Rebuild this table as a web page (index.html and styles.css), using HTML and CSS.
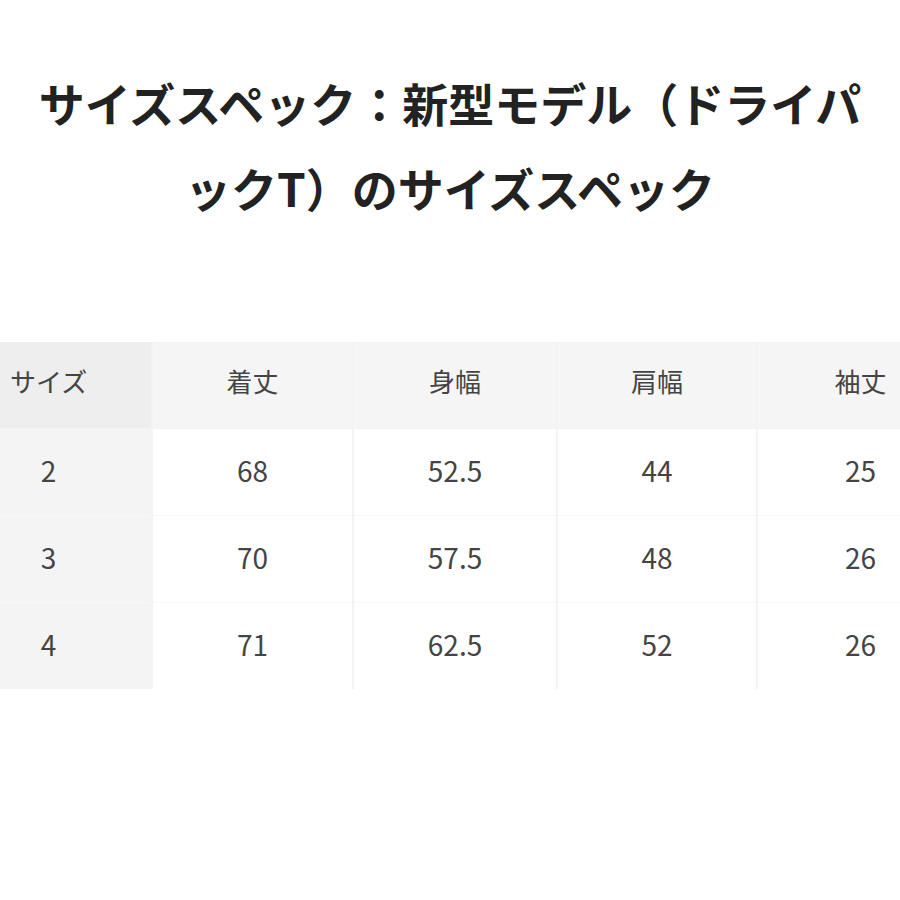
FILE: index.html
```html
<!DOCTYPE html>
<html lang="ja">
<head>
<meta charset="utf-8">
<link rel="stylesheet" href="styles.css">
</head>
<body>
<div class="page">
  <h1 class="title">サイズスペック：新型モデル（ドライパ<br>ックT）のサイズスペック</h1>
  <div class="table-wrap">
    <table class="spec">
      <colgroup>
        <col class="c-size"><col class="c-a"><col class="c-b"><col class="c-c"><col class="c-d">
      </colgroup>
      <thead>
        <tr><th class="first">サイズ</th><th>着丈</th><th>身幅</th><th>肩幅</th><th>袖丈</th></tr>
      </thead>
      <tbody>
        <tr><td class="first">2</td><td>68</td><td>52.5</td><td>44</td><td>25</td></tr>
        <tr><td class="first">3</td><td>70</td><td>57.5</td><td>48</td><td>26</td></tr>
        <tr><td class="first">4</td><td>71</td><td>62.5</td><td>52</td><td>26</td></tr>
      </tbody>
    </table>
  </div>
</div>
</body>
</html>
```

FILE: styles.css
```css
html, body {
  margin: 0;
  padding: 0;
  background: #ffffff;
  overflow: hidden;
}
body {
  width: 900px;
  height: 900px;
  font-family: "Noto Sans CJK JP", "Noto Sans", sans-serif;
}
.page {
  padding-top: 60px;
  width: 900px;
  overflow: hidden;
}
.title {
  margin: 0;
  text-align: center;
  font-size: 46px;
  line-height: 85px;
  font-weight: 700;
  color: #222222;
}
.table-wrap {
  margin-top: 112px;
  width: 900px;
  overflow: hidden;
}
.spec {
  width: 963px;
  table-layout: fixed;
  border-collapse: collapse;
  color: #444444;
}
.c-size { width: 152px; }
.c-a { width: 201px; }
.c-b { width: 204px; }
.c-c { width: 200px; }
.c-d { width: 206px; }
.spec th, .spec td {
  text-align: center;
  padding: 0;
  white-space: nowrap;
  border-left: 2px solid #f3f3f3;
}
.spec th {
  height: 86px;
  padding-bottom: 8px;
  box-sizing: border-box;
  background: #f5f5f5;
  font-weight: 400;
  font-size: 26px;
  border-bottom: 1px solid #f2f2f2;
}
.spec td {
  height: 87px;
  padding-bottom: 3px;
  box-sizing: border-box;
  font-size: 28px;
  border-top: 1px solid #f8f8f8;
}
.spec .first {
  border-left: none;
  padding-left: 10px;
  padding-right: 64px;
  background: #f4f4f4;
}
.spec th.first {
  background: #eeeeee;
}
```
